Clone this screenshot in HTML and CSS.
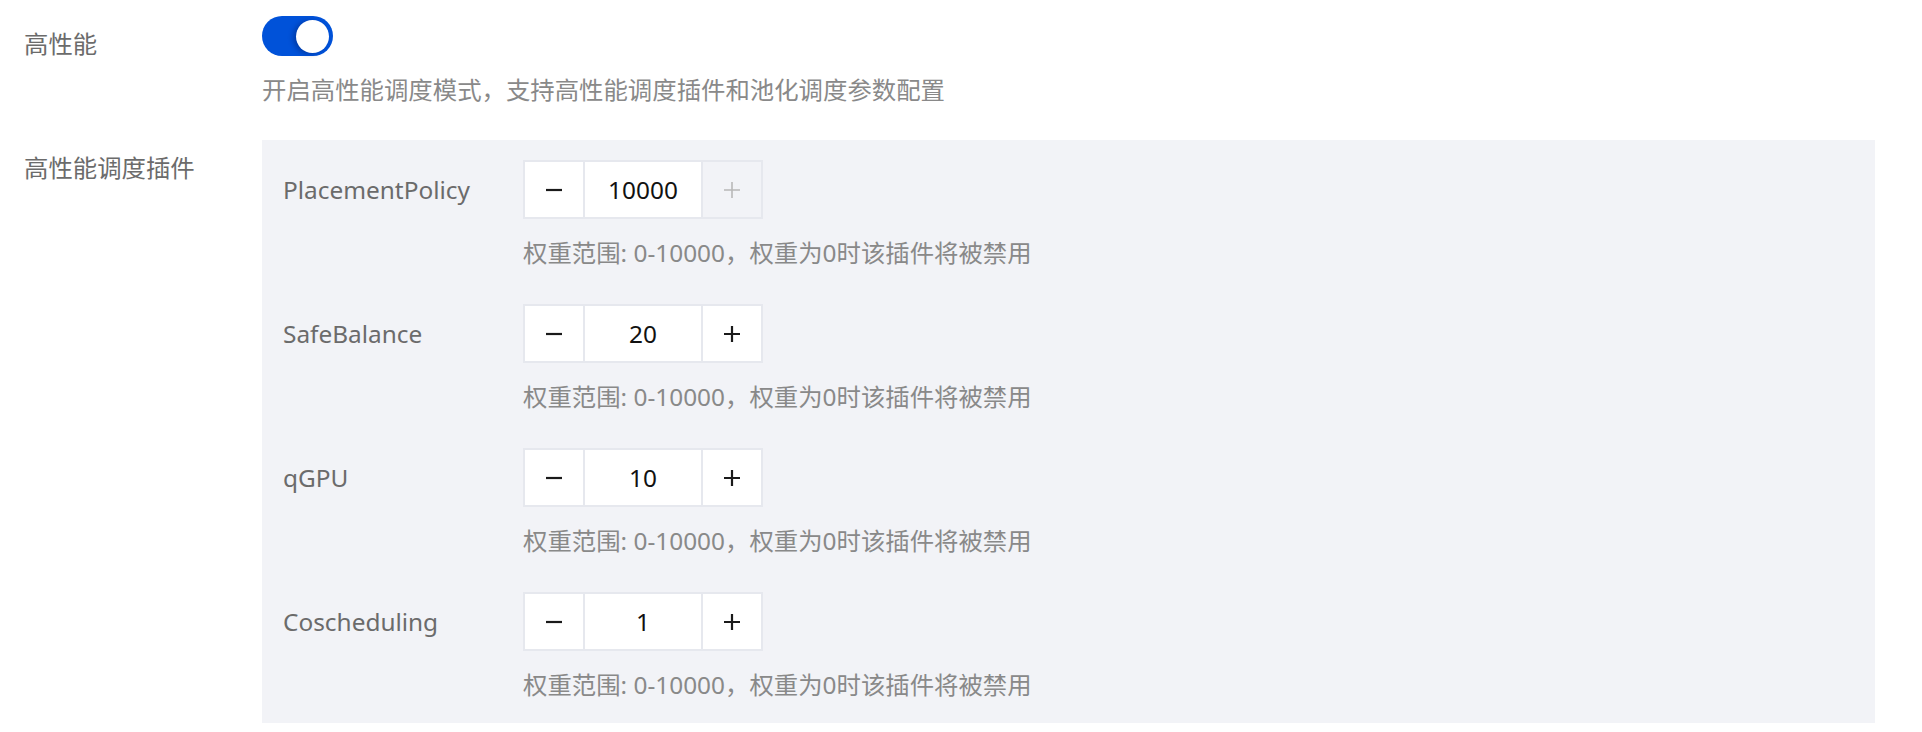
FILE: index.html
```html
<!DOCTYPE html>
<html lang="zh-CN">
<head>
<meta charset="utf-8">
<title>高性能调度</title>
<link rel="stylesheet" href="styles.css">
</head>
<body>
<div class="form">
  <div class="form-item first">
    <div class="form-label">高性能</div>
    <div class="form-content">
      <div class="switch on"><span class="knob"></span></div>
      <div class="desc">开启高性能调度模式，支持高性能调度插件和池化调度参数配置</div>
    </div>
  </div>
  <div class="form-item second">
    <div class="form-label">高性能调度插件</div>
    <div class="panel">
      <div class="plugin">
        <div class="plugin-row">
          <div class="plugin-label">PlacementPolicy</div>
          <div class="stepper">
            <button class="step-btn"><svg viewBox="0 0 16 16" width="16" height="16"><path d="M0 8h16" stroke="currentColor" stroke-width="2.2"/></svg></button>
            <div class="step-value">10000</div>
            <button class="step-btn disabled"><svg viewBox="0 0 16 16" width="16" height="16"><path d="M0 8h16M8 0v16" stroke="currentColor" stroke-width="1.6"/></svg></button>
          </div>
        </div>
        <div class="help">权重范围: 0-10000，权重为0时该插件将被禁用</div>
      </div>
      <div class="plugin">
        <div class="plugin-row">
          <div class="plugin-label">SafeBalance</div>
          <div class="stepper">
            <button class="step-btn"><svg viewBox="0 0 16 16" width="16" height="16"><path d="M0 8h16" stroke="currentColor" stroke-width="2.2"/></svg></button>
            <div class="step-value">20</div>
            <button class="step-btn"><svg viewBox="0 0 16 16" width="16" height="16"><path d="M0 8h16M8 0v16" stroke="currentColor" stroke-width="2.2"/></svg></button>
          </div>
        </div>
        <div class="help">权重范围: 0-10000，权重为0时该插件将被禁用</div>
      </div>
      <div class="plugin">
        <div class="plugin-row">
          <div class="plugin-label">qGPU</div>
          <div class="stepper">
            <button class="step-btn"><svg viewBox="0 0 16 16" width="16" height="16"><path d="M0 8h16" stroke="currentColor" stroke-width="2.2"/></svg></button>
            <div class="step-value">10</div>
            <button class="step-btn"><svg viewBox="0 0 16 16" width="16" height="16"><path d="M0 8h16M8 0v16" stroke="currentColor" stroke-width="2.2"/></svg></button>
          </div>
        </div>
        <div class="help">权重范围: 0-10000，权重为0时该插件将被禁用</div>
      </div>
      <div class="plugin">
        <div class="plugin-row">
          <div class="plugin-label">Coscheduling</div>
          <div class="stepper">
            <button class="step-btn"><svg viewBox="0 0 16 16" width="16" height="16"><path d="M0 8h16" stroke="currentColor" stroke-width="2.2"/></svg></button>
            <div class="step-value">1</div>
            <button class="step-btn"><svg viewBox="0 0 16 16" width="16" height="16"><path d="M0 8h16M8 0v16" stroke="currentColor" stroke-width="2.2"/></svg></button>
          </div>
        </div>
        <div class="help">权重范围: 0-10000，权重为0时该插件将被禁用</div>
      </div>
    </div>
  </div>
</div>
</body>
</html>
```

FILE: styles.css
```css
* { box-sizing: border-box; }
html, body {
  margin: 0;
  padding: 0;
  background: #ffffff;
}
body {
  font-family: "Noto Sans", "Noto Sans CJK SC", sans-serif;
  font-size: 24.4px;
  color: #666;
}
.form {
  padding: 16px 47px 0 24px;
  display: flex;
  flex-direction: column;
  gap: 34px;
}
.form-item {
  display: flex;
}
.form-label {
  width: 238px;
  flex: none;
  line-height: 32px;
  color: #6b6b6b;
}
.first .form-label { padding-top: 12px; }
.second .form-label { padding-top: 12px; }
.form-content {
  display: flex;
  flex-direction: column;
  align-items: flex-start;
}
.switch {
  width: 71px;
  height: 40px;
  border-radius: 20px;
  background: #0052d9;
  display: flex;
  align-items: center;
  justify-content: flex-end;
  padding: 0 4px;
}
.knob {
  width: 33px;
  height: 33px;
  border-radius: 50%;
  background: #fff;
  box-shadow: -3px 1px 5px rgba(0, 20, 80, 0.35);
}
.desc {
  margin-top: 18px;
  line-height: 32px;
  color: #898989;
}
.panel {
  flex: 1;
  background: #f2f3f7;
  padding: 20px 21px 22px;
  display: flex;
  flex-direction: column;
  gap: 35px;
}
.plugin {
  display: flex;
  flex-direction: column;
}
.plugin-row {
  display: flex;
  align-items: center;
  height: 59px;
}
.plugin-label {
  width: 240px;
  flex: none;
  color: #6b6b6b;
}
.stepper {
  display: flex;
  height: 59px;
  border: 2px solid #e6e8ee;
  background: #fff;
}
.step-btn {
  width: 58px;
  border: 0;
  margin: 0;
  padding: 0;
  background: #fff;
  color: #1a1a1a;
  display: flex;
  align-items: center;
  justify-content: center;
}
.step-btn.disabled {
  background: #f2f3f7;
  color: #b8b8b8;
}
.step-value {
  width: 120px;
  border-left: 2px solid #e6e8ee;
  border-right: 2px solid #e6e8ee;
  display: flex;
  align-items: center;
  justify-content: center;
  color: #111;
}
.help {
  margin-top: 18px;
  margin-left: 240px;
  line-height: 32px;
  color: #898989;
}
```
